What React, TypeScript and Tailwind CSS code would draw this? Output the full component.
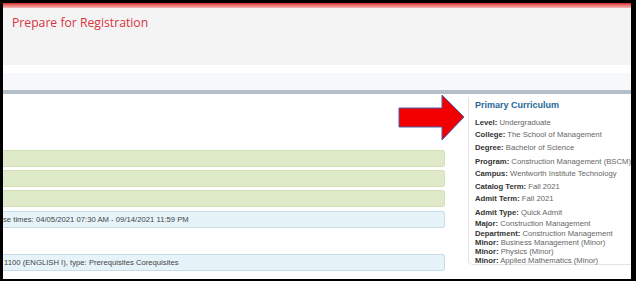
import React from 'react';

const curriculum = [
  { label: 'Level', value: 'Undergraduate', gap: 'mt-[7px]' },
  { label: 'College', value: 'The School of Management', gap: 'mt-[3px]' },
  { label: 'Degree', value: 'Bachelor of Science', gap: 'mt-[4px]' },
  { label: 'Program', value: 'Construction Management (BSCM)', gap: 'mt-[5px]' },
  { label: 'Campus', value: 'Wentworth Institute Technology', gap: 'mt-[3px]' },
  { label: 'Catalog Term', value: 'Fall 2021', gap: 'mt-[4px]' },
  { label: 'Admit Term', value: 'Fall 2021', gap: 'mt-[3px]' },
  { label: 'Admit Type', value: 'Quick Admit', gap: 'mt-[5px]' },
  { label: 'Major', value: 'Construction Management', gap: 'mt-[2px]' },
  { label: 'Department', value: 'Construction Management', gap: 'mt-[1px]' },
  { label: 'Minor', value: 'Business Management (Minor)', gap: 'mt-0' },
  { label: 'Minor', value: 'Physics (Minor)', gap: 'mt-0' },
  { label: 'Minor', value: 'Applied Mathematics (Minor)', gap: 'mt-0' },
];

const App: React.FC = () => {
  return (
    <div className="w-[636px] h-[281px] bg-black pt-[3px] pl-[3px] pr-[5px] pb-[2px] font-['Liberation_Sans',Arial,sans-serif]">
      <div className="w-full h-full bg-white flex flex-col overflow-hidden">
        {/* red accent line */}
        <div className="h-[5px] bg-gradient-to-b from-[#d8202c] to-[#f4b9bd]" />

        {/* page header */}
        <div className="h-[57px] bg-[#f4f4f4] pl-[9px] pt-[6px]">
          <h1 className="font-['Open_Sans',sans-serif] text-[12.2px] leading-[18px] text-[#d6353f]">
            Prepare for Registration
          </h1>
        </div>
        <div className="h-[8px] bg-white" />
        <div className="h-[17px] bg-[#f6f8fa]" />
        <div className="h-[4px] bg-[#b4bec9]" />

        {/* content */}
        <div className="relative flex-1 flex">
          <div className="w-[442px] pt-[56px] flex flex-col text-[7.7px] text-[#444]">
            <div className="h-[17px] bg-[#dfeac9] border border-l-0 border-[#d2e0b6] rounded-r-[3px]" />
            <div className="h-[17px] mt-[3px] bg-[#dfeac9] border border-l-0 border-[#d2e0b6] rounded-r-[3px]" />
            <div className="h-[17px] mt-[3px] bg-[#dfeac9] border border-l-0 border-[#d2e0b6] rounded-r-[3px]" />
            <div className="h-[17px] mt-[4px] bg-[#e6f3f8] border border-l-0 border-[#c6dde7] rounded-r-[3px] flex items-center whitespace-nowrap">
              se times: 04/05/2021 07:30 AM - 09/14/2021 11:59 PM
            </div>
            <div className="h-[17px] mt-[26px] bg-[#e6f3f8] border border-l-0 border-[#c6dde7] rounded-r-[3px] flex items-center whitespace-nowrap pl-[1px]">
              1100 (ENGLISH I), type: Prerequisites Corequisites
            </div>
          </div>

          <div className="ml-[23px] mt-[3px] h-[168px] flex-1 border-l border-b border-[#e2e2e2] rounded-bl-[5px] pl-[6px] pt-[2px] whitespace-nowrap">
            <div className="text-[9px] leading-[12px] font-bold text-[#27679a]">Primary Curriculum</div>
            {curriculum.map((row, i) => (
              <div key={i} className={`${row.gap} text-[7.7px] leading-[9px] text-[#666]`}>
                <span className="font-bold text-[#333]">{row.label}:</span> {row.value}
              </div>
            ))}
          </div>

          {/* red pointer arrow */}
          <svg className="absolute left-[395px] top-0" width="70" height="50" viewBox="0 0 70 50">
            <polygon
              points="1,14 44,14 44,1 66,23 44,46 44,33 1,33"
              fill="#f20000"
              stroke="#4a5fa8"
              strokeWidth="1"
            />
          </svg>
        </div>
      </div>
    </div>
  );
};

export default App;
